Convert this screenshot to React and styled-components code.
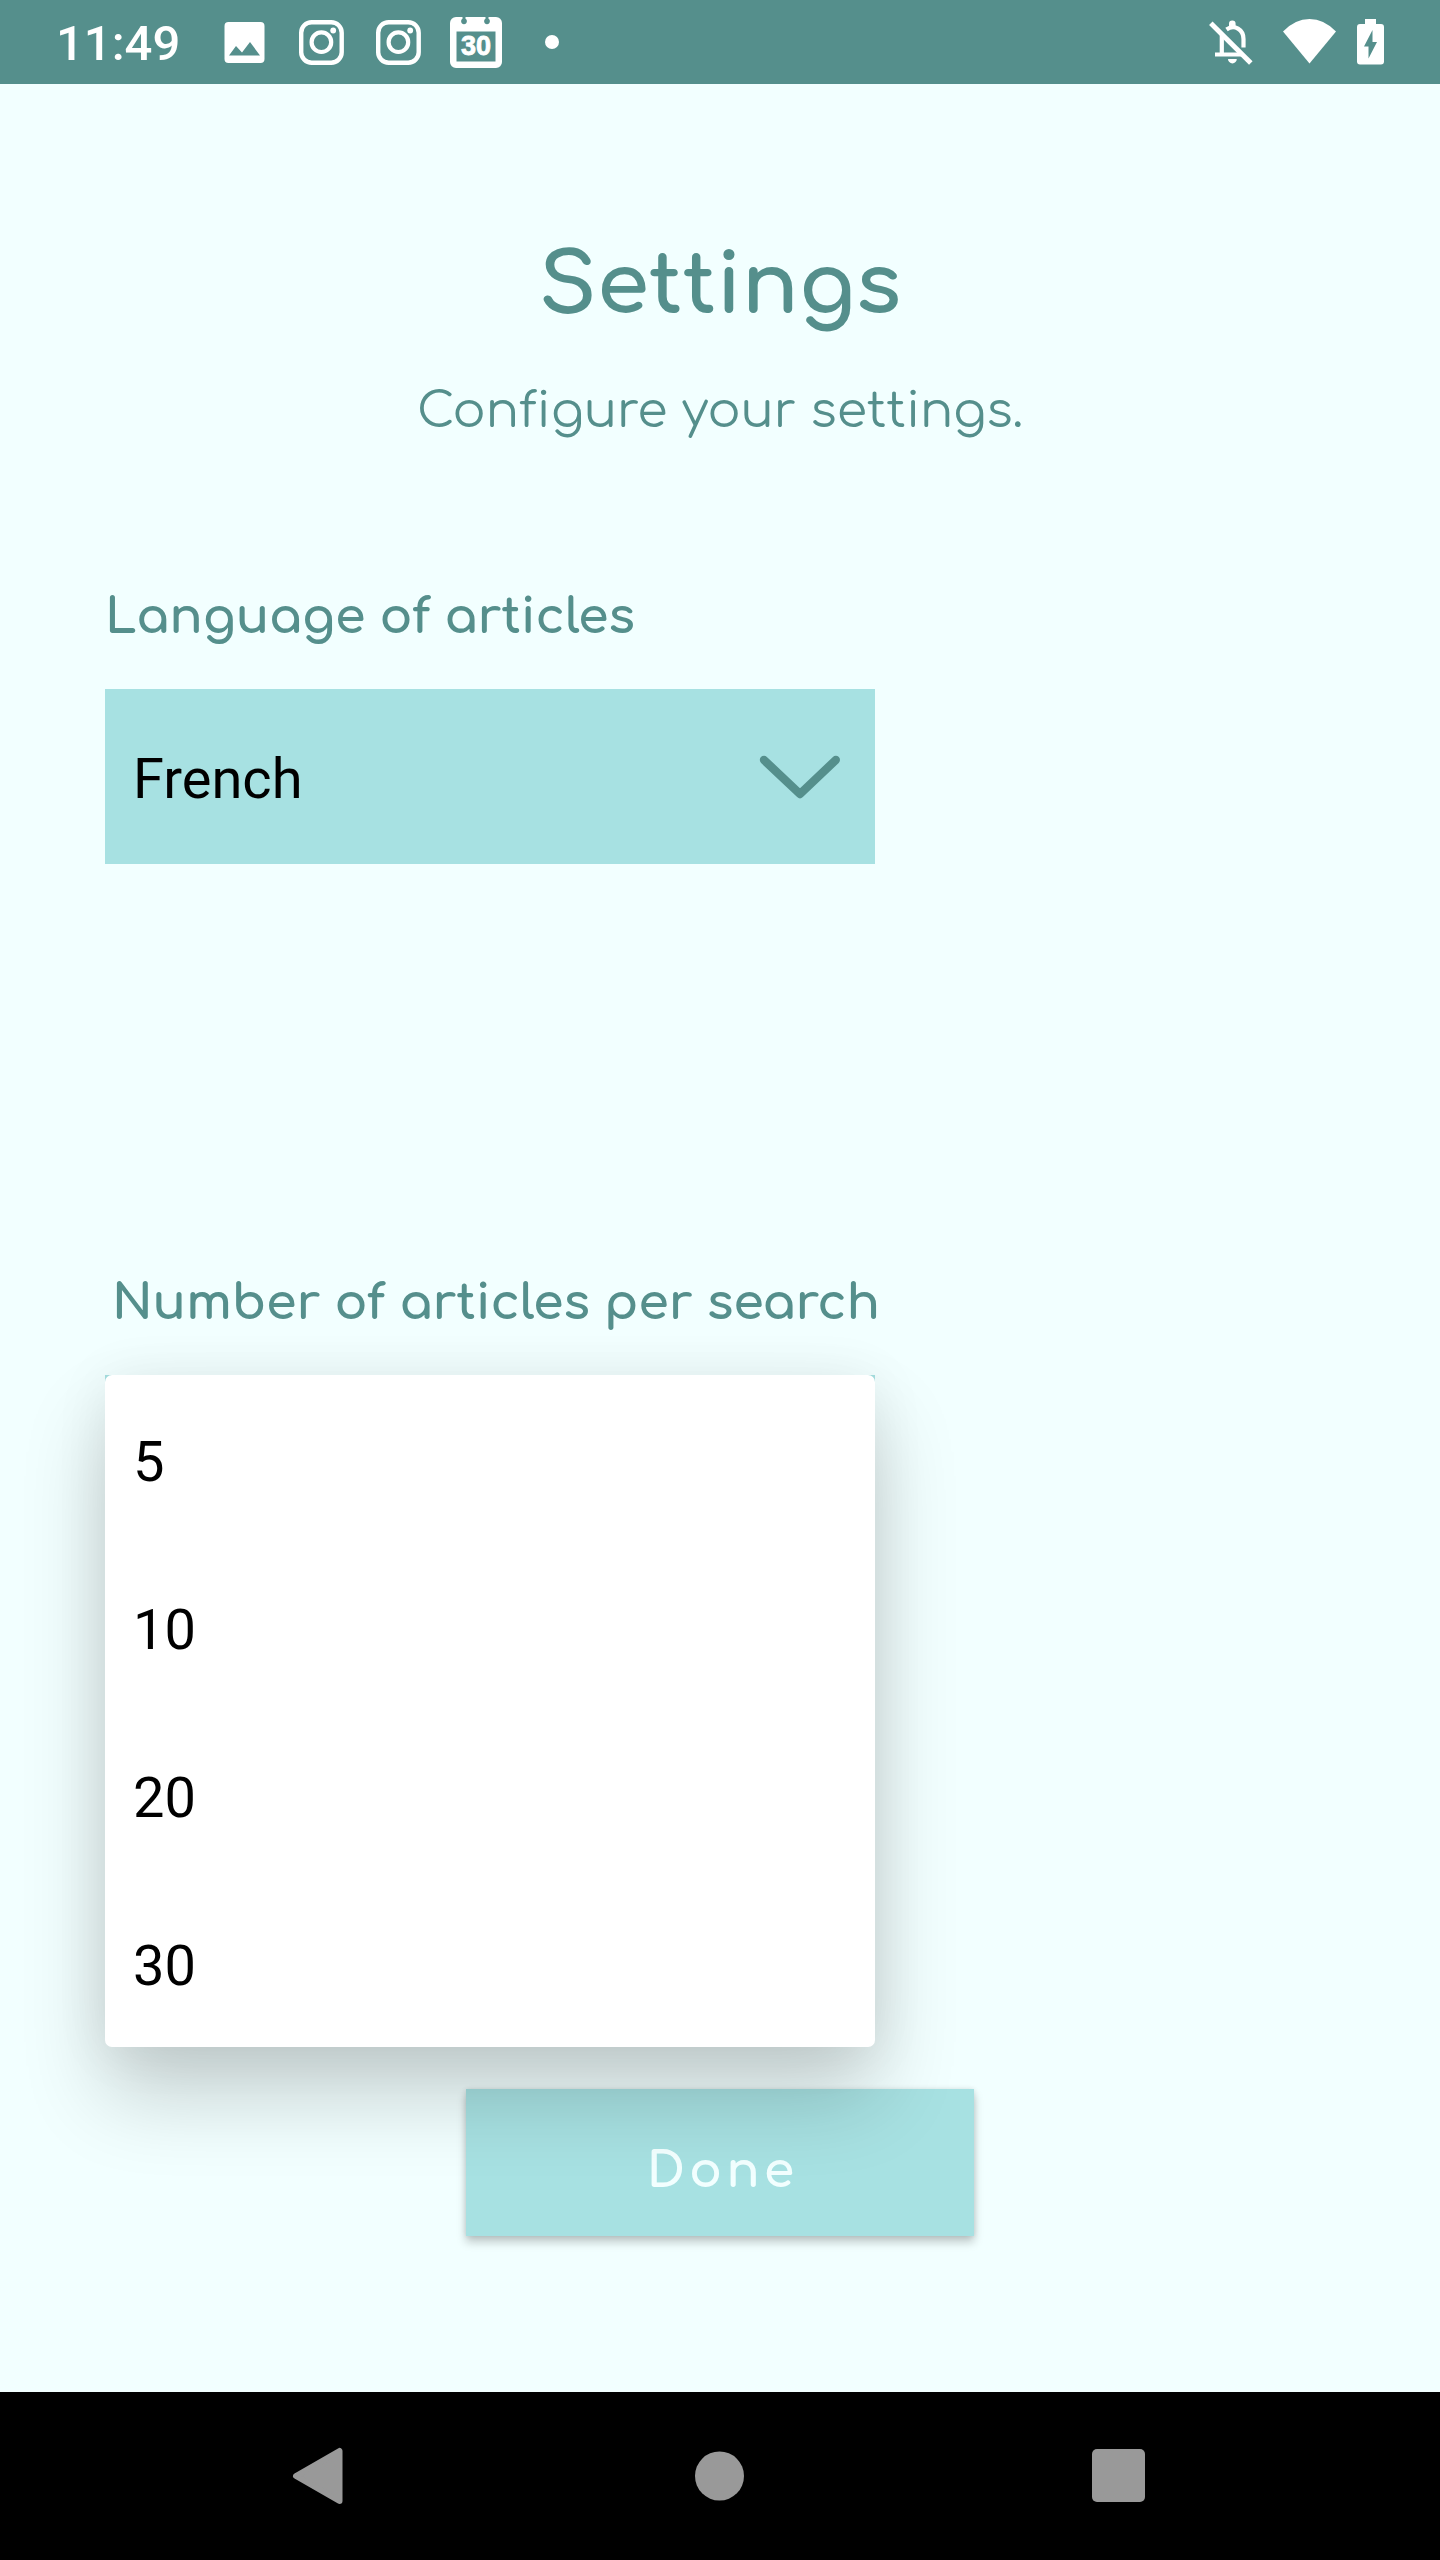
import React from "react";
import styled, { createGlobalStyle } from "styled-components";

const Global = createGlobalStyle`
  * { box-sizing: border-box; }
  body { margin: 0; background: #f2ffff; }
`;

const rounded = `"Comfortaa", "Inter", "Lato", sans-serif`;

const Screen = styled.div`
  width: 1440px;
  height: 2560px;
  display: flex;
  flex-direction: column;
  background: #f2ffff;
  color: #558f8c;
  font-family: Roboto, sans-serif;
  overflow: hidden;
`;

const StatusBar = styled.header`
  height: 84px;
  flex: none;
  display: flex;
  justify-content: space-between;
  padding: 0 56px 0 56px;
  background: #558f8c;
  color: #fff;
`;

const StatusGroup = styled.div`
  display: flex;
  align-items: center;
`;

const Clock = styled.time`
  width: 168px;
  padding-top: 4px;
  font: 500 49px/84px Roboto, sans-serif;
`;

const Glyph = styled.svg`
  flex: none;
  display: block;
  width: ${(p) => p.$w}px;
  height: ${(p) => p.$h || 84}px;
  margin-left: ${(p) => p.$gap || 0}px;
`;

const CalendarBadge = styled.div`
  width: 52px;
  height: 84px;
  margin-left: 28px;
  display: grid;
  > * { grid-area: 1 / 1; }
`;

const CalendarDay = styled.span`
  padding-top: 4px;
  text-align: center;
  font: 700 27px/84px "Liberation Sans", sans-serif;
  -webkit-text-stroke: 0.8px #fff;
`;

const Content = styled.main`
  flex: 1;
  display: flex;
  flex-direction: column;
  padding: 142px 105px 0;
`;

const Title = styled.h1`
  margin: 0;
  text-align: center;
  font: 700 84px/120px ${rounded};
`;

const Subtitle = styled.p`
  margin: 15px 0 0;
  text-align: center;
  font: 400 49px/100px ${rounded};
  letter-spacing: -0.07px;
`;

const Field = styled.section`
  width: 770px;
  margin-top: ${(p) => p.$top}px;
`;

const Label = styled.label`
  display: block;
  height: 112px;
  padding-left: ${(p) => p.$indent}px;
  font: 700 49px/80px ${rounded};
  letter-spacing: -0.1px;
  white-space: nowrap;
`;

const Select = styled.div`
  height: 175px;
  display: flex;
  align-items: center;
  justify-content: space-between;
  padding: 4px 35px 0 28px;
  background: #a7e1e2;
  color: #000;
  font-size: 56px;
`;

const Anchor = styled.div`
  position: relative;
  height: 175px;
  background: #a7e1e2;
`;

const Menu = styled.ul`
  position: absolute;
  z-index: 2;
  inset: 0 0 auto 0;
  margin: 0;
  padding: 0;
  list-style: none;
  border-radius: 7px;
  background: #fff;
  color: #000;
  box-shadow: 0 48px 84px rgba(0, 0, 0, 0.19), 0 4px 56px rgba(0, 0, 0, 0.07);
`;

const Option = styled.li`
  height: 168px;
  padding: 3px 28px 0;
  font-size: 56px;
  line-height: 168px;
`;

const Done = styled.button`
  align-self: center;
  width: 508px;
  height: 147px;
  margin: 539px 0 0;
  padding: 16px 0 0 5px;
  border: 0;
  border-radius: 0;
  background: #a7e1e2;
  color: #f2ffff;
  font: 700 49px/80px ${rounded};
  letter-spacing: 4.1px;
  box-shadow: 0 6px 9px rgba(0, 0, 0, 0.22), 0 0 5px rgba(0, 0, 0, 0.1);
`;

const NavBar = styled.nav`
  height: 168px;
  flex: none;
  display: flex;
  align-items: center;
  justify-content: space-between;
  padding: 0 290px;
  background: #000;
`;

const CameraIcon = ({ gap }) => (
  <Glyph $w={46} $gap={gap} viewBox="0 0 46 84" fill="none" stroke="#fff">
    <rect x="2.2" y="22.2" width="40.500" height="40.500" rx="10.500" strokeWidth="4.4" />
    <circle cx="22.4" cy="42.2" r="9.8" strokeWidth="4.2" />
    <circle cx="34.2" cy="30.5" r="2.9" fill="#fff" stroke="none" />
  </Glyph>
);

export default function App() {
  return (
    <Screen>
      <Global />
      <StatusBar>
        <StatusGroup>
          <Clock>11:49</Clock>
          <Glyph $w={41} viewBox="0 0 41 84">
            <path fill="#fff" fillRule="evenodd" d="M4.500 22h32a4 4 0 0 1 4 4v33a4 4 0 0 1-4 4h-32a4 4 0 0 1-4-4V26a4 4 0 0 1 4-4zM5 55.500h31L26 42l-8 10.500-6-6.500z" />
          </Glyph>
          <CameraIcon gap={34} />
          <CameraIcon gap={31} />
          <CalendarBadge>
            <Glyph $w={52} viewBox="0 0 52 84">
              <path fill="#fff" fillRule="evenodd" d="M6 17h6.500v1.800a2.900 2.900 0 1 0 3 0V17h20v1.800a2.900 2.900 0 1 0 3 0V17H46a6 6 0 0 1 6 6v39a6 6 0 0 1-6 6H6a6 6 0 0 1-6-6V23a6 6 0 0 1 6-6zM6.500 31.500v30h39v-30z" />
            </Glyph>
            <CalendarDay>30</CalendarDay>
          </CalendarBadge>
          <Glyph $w={14} $gap={43} viewBox="0 0 14 84"><circle cx="7" cy="42" r="7" fill="#fff" /></Glyph>
        </StatusGroup>
        <StatusGroup>
          <Glyph $w={44} viewBox="0 0 44 84" fill="none" stroke="#fff" strokeWidth="4.2">
            <path strokeWidth="5" d="M1.800 23.200L41.800 63" />
            <path d="M6 54.500H33.500M12.800 54V35M17.500 29.500c8-5.500 17 0 17 9.500v8.500" />
            <path fill="#fff" stroke="none" d="M20 28v-4.200a3.300 3.300 0 0 1 6.600 0V28zM19 59h8.800a4.400 4.400 0 0 1-8.800 0z" />
          </Glyph>
          <Glyph $w={54} $gap={30} viewBox="0 0 54 84">
            <path fill="#fff" d="M0 31.500Q12 19 26.500 19T53 31.500L26.500 63.500z" />
          </Glyph>
          <Glyph $w={27} $gap={20} viewBox="0 0 27 84">
            <path fill="#fff" fillRule="evenodd" d="M8 19h11v5h5a3 3 0 0 1 3 3v34.500a3 3 0 0 1-3 3H3a3 3 0 0 1-3-3V27a3 3 0 0 1 3-3h5zM15.500 30L7 46.500h4.500V58.500L20 42h-4.500z" />
          </Glyph>
        </StatusGroup>
      </StatusBar>
      <Content>
        <Title>Settings</Title>
        <Subtitle>Configure your settings.</Subtitle>
        <Field $top={116}>
          <Label $indent={0}>Language of articles</Label>
          <Select>
            French
            <Glyph $w={82} $h={48} viewBox="0 0 82 48" fill="none" stroke="#558f8c" strokeWidth="8.4" strokeLinecap="round" strokeLinejoin="round">
              <path d="M6 5L42 39L77.800 5" />
            </Glyph>
          </Select>
        </Field>
        <Field $top={399}>
          <Label $indent={7}>Number of articles per search</Label>
          <Anchor>
            <Menu>
              {["5", "10", "20", "30"].map((n) => <Option key={n}>{n}</Option>)}
            </Menu>
          </Anchor>
        </Field>
        <Done>Done</Done>
      </Content>
      <NavBar>
        <Glyph $w={56} $h={58} viewBox="0 0 56 58"><path fill="#999" stroke="#999" strokeWidth="6" strokeLinejoin="round" d="M6 29L49.500 4V54z" /></Glyph>
        <Glyph $w={50} $h={50} viewBox="0 0 50 50"><circle cx="25.500" cy="25" r="24.500" fill="#999" /></Glyph>
        <Glyph $w={58} $h={54} viewBox="0 0 58 54"><rect width="53" height="53" rx="5" fill="#999" /></Glyph>
      </NavBar>
    </Screen>
  );
}
